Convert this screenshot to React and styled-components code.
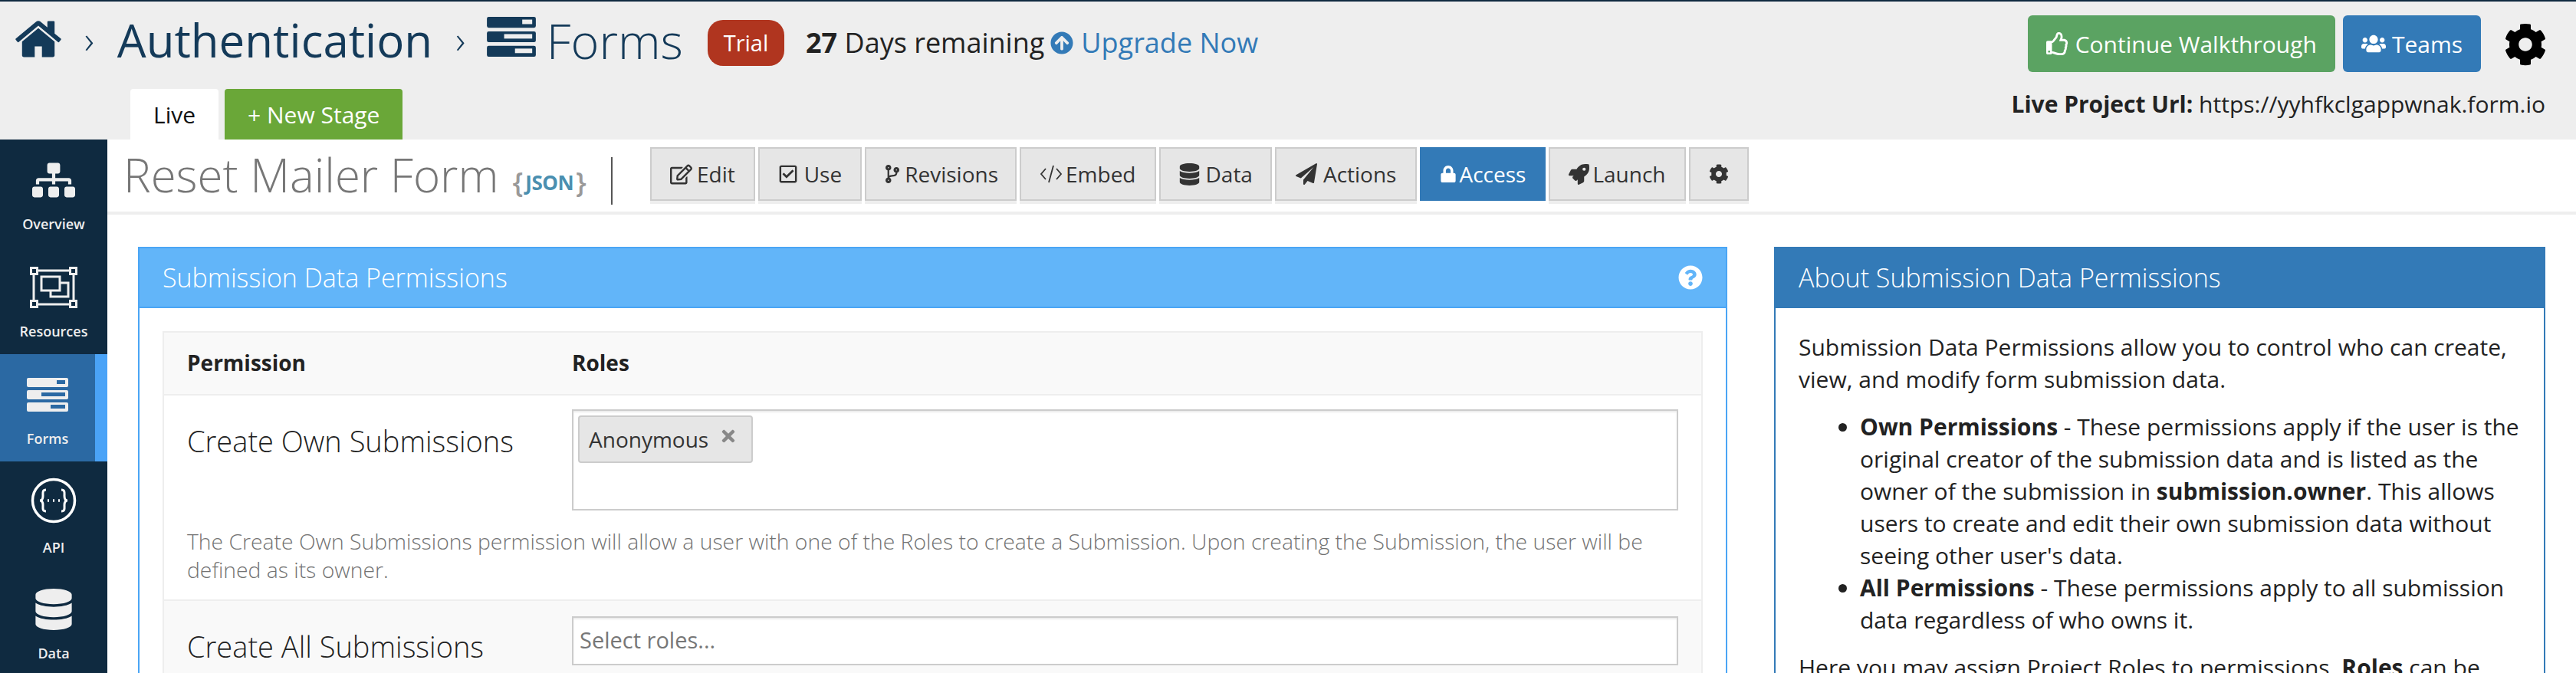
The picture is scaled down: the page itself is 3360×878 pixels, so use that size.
import React from 'react'
import styled, { createGlobalStyle } from 'styled-components'
import {
  FaSitemap, FaDatabase, FaCodeBranch, FaLock, FaRocket, FaCog,
  FaRegThumbsUp, FaUsers, FaArrowCircleUp, FaQuestionCircle, FaTimes, FaRegEdit, FaRegCheckSquare,
} from 'react-icons/fa'

const Global = createGlobalStyle`
  html, body { margin: 0; padding: 0; background: #fff; }
  body { font-family: "Open Sans", sans-serif; font-size: 28px; line-height: 1.5; color: #222; overflow: hidden; }
  * { box-sizing: border-box; }
`

const Page = styled.div`
  width: 3360px;
  height: 878px;
  overflow: hidden;
  display: flex;
  flex-direction: column;
`

const Header = styled.header`
  height: 182px;
  flex: none;
  background: #eee;
  border-top: 2px solid #0f2a40;
  display: flex;
  flex-direction: column;
`

const HeaderTop = styled.div`
  height: 114px;
  flex: none;
  display: flex;
  justify-content: space-between;
  padding: 18px 38px 0 17px;
`

const Crumbs = styled.div`
  display: flex;
  align-items: center;
  height: 66px;
  margin-top: 3px;
  color: #143a59;
`

const CrumbIcon = styled.span`
  display: flex;
  margin-bottom: ${p => p.$lift}px;
`

const Chevron = styled.span`
  font-size: 50px;
  font-weight: 300;
  line-height: 1;
  margin: ${p => p.$margin};
  color: #143a59;
`

const CrumbText = styled.span`
  font-size: ${p => p.$light ? 63 : 60}px;
  line-height: 1;
  margin-bottom: 8px;
  font-weight: ${p => p.$light ? 300 : 400};
  margin-left: ${p => p.$gap || 0}px;
`

const TrialBadge = styled.span`
  width: 100px;
  height: 60px;
  margin-left: 32px;
  border-radius: 20px;
  background: #b0351f;
  color: #fff;
  display: flex;
  align-items: center;
  justify-content: center;
  font-size: 29px;
`

const Remaining = styled.span`
  margin-left: 28px;
  font-size: 36px;
  color: #222;
  white-space: nowrap;
  b { font-weight: 700; }
`

const Upgrade = styled.a`
  margin-left: 8px;
  font-size: 36px;
  color: #337ab7;
  display: flex;
  align-items: center;
  gap: 10px;
  white-space: nowrap;
`

const HeaderActions = styled.div`
  display: flex;
  align-items: flex-start;
  gap: 10px;
`

const ActionButton = styled.a`
  height: 74px;
  padding: 0 24px;
  border-radius: 6px;
  background: ${p => p.$bg};
  color: #fff;
  display: flex;
  align-items: center;
  gap: 8px;
  font-size: 30px;
  white-space: nowrap;
`

const TopGear = styled.span`
  display: flex;
  margin: 10px 0 0 20px;
  color: #000;
  font-size: 56px;
`

const HeaderBottom = styled.div`
  flex: 1;
  display: flex;
  justify-content: space-between;
  padding: 0 40px 0 170px;
`

const Tabs = styled.div`
  display: flex;
  gap: 8px;
`

const Tab = styled.a`
  height: 66px;
  padding: 0 ${p => p.$pad}px;
  border-radius: 4px 4px 0 0;
  background: ${p => p.$bg};
  color: ${p => p.$color};
  display: flex;
  align-items: center;
  font-size: 30px;
`

const ProjectUrl = styled.div`
  font-size: 30px;
  line-height: 40px;
  color: #222;
  b { font-weight: 700; }
`

const Body = styled.div`
  flex: 1;
  display: flex;
  min-height: 0;
`

const Sidebar = styled.nav`
  width: 140px;
  flex: none;
  background: #0f2a40;
`

const NavItem = styled.a`
  height: 140px;
  display: flex;
  flex-direction: column;
  align-items: center;
  color: #eee;
  padding-top: ${p => p.$top || 22}px;
  font-size: 18px;
  font-weight: 600;
  line-height: 24px;
  background: ${p => p.$active ? '#2b69a3' : 'transparent'};
  border-right: ${p => p.$active ? '16px solid #4aa3f7' : '0'};
`

const NavIcon = styled.span`
  height: 62px;
  display: flex;
  align-items: center;
  justify-content: center;
  margin-bottom: ${p => p.$below || 14}px;
`

const Content = styled.main`
  flex: 1;
  min-width: 0;
`

const TitleBar = styled.div`
  height: 98px;
  border-bottom: 4px solid #eee;
  display: flex;
  padding: 10px 0 0 21px;
`

const FormTitle = styled.h1`
  margin: 0;
  font-size: 60px;
  line-height: 72px;
  font-weight: 300;
  color: #777;
  white-space: nowrap;
`

const JsonMark = styled.span`
  height: 44px;
  margin: 24px 0 0 18px;
  display: flex;
  align-items: center;
  font-size: 36px;
  font-weight: 600;
  color: #999;
  white-space: nowrap;
  i { font-style: normal; font-weight: 700; color: #4a8fb0; font-size: 26px; letter-spacing: -0.5px; margin: 0 3px; }
`

const Divider = styled.span`
  width: 2px;
  height: 62px;
  margin: 13px 49px 0 32px;
  background: #555;
  flex: none;
`

const ButtonRow = styled.div`
  display: flex;
  gap: 4px;
`

const TabButton = styled.a`
  height: 70px;
  padding: 0 ${p => p.$pad || 24}px;
  display: flex;
  align-items: center;
  gap: ${p => p.$gap || 8}px;
  font-size: 28px;
  white-space: nowrap;
  border: 2px solid ${p => p.$active ? '#337ab7' : '#ccc'};
  background: ${p => p.$active ? '#337ab7' : '#e6e6e6'};
  color: ${p => p.$active ? '#fff' : '#333'};
  box-shadow: ${p => p.$active ? 'none' : '0 4px 0 #eee'};
`

const Panels = styled.div`
  display: grid;
  grid-template-columns: 2073px 1006px;
  gap: 61px;
  padding: 42px 40px 0;
`

const Panel = styled.section`
  border: 2px solid ${p => p.$color};
  min-height: 600px;
`

const PanelHead = styled.div`
  height: 78px;
  padding: 0 30px;
  background: ${p => p.$bg};
  border-bottom: 2px solid ${p => p.$color};
  color: #fff;
  font-size: 34px;
  display: flex;
  align-items: center;
  justify-content: space-between;
  font-weight: 300;
`

const PanelBody = styled.div`
  padding: 30px;
`

const Table = styled.div`
  border: 2px solid #eee;
`

const TableRow = styled.div`
  display: grid;
  grid-template-columns: 502px 1fr;
  padding: ${p => p.$pad || '18px 30px'};
  background: ${p => p.$shade ? '#f9f9f9' : '#fff'};
  border-top: ${p => p.$first ? '0' : '2px solid #eee'};
`

const HeadCell = styled.div`
  font-size: 28px;
  font-weight: 700;
  line-height: 42px;
`

const RowLabel = styled.div`
  font-size: 38px;
  font-weight: 300;
  line-height: 50px;
  padding-top: ${p => p.$top}px;
  color: #222;
`

const RoleBox = styled.div`
  height: ${p => p.$height}px;
  border: 2px solid #ccc;
  background: #fff;
  box-shadow: inset 0 2px 2px rgba(0, 0, 0, 0.075);
  padding: 6px;
  display: flex;
  align-items: flex-start;
  color: #777;
  font-size: 28px;
`

const Chip = styled.span`
  height: 62px;
  padding: 0 18px 0 12px;
  display: flex;
  align-items: center;
  gap: 14px;
  background: #e6e6e6;
  border: 2px solid #ccc;
  border-radius: 4px;
  color: #333;
  svg { color: #888; margin-bottom: 8px; }
`

const Placeholder = styled.span`
  line-height: 46px;
  padding-left: 2px;
  font-size: 29px;
  color: #777;
`

const HelpText = styled.p`
  grid-column: 1 / -1;
  margin: 22px 0 0;
  font-size: 28.3px;
  line-height: 37px;
  font-weight: 300;
  color: #737373;
`

const AboutText = styled.p`
  margin: 0 0 20px;
  font-size: 30px;
  line-height: 42px;
`

const AboutList = styled.ul`
  margin: 0 0 20px;
  padding-left: 80px;
  font-size: 30px;
  line-height: 42px;
`

const HomeIcon = () => (
  <svg width="66" height="66" viewBox="0 0 1792 1792" fill="currentColor">
    <path d="M1472 992v480q0 26-19 45t-45 19h-384v-384h-256v384h-384q-26 0-45-19t-19-45v-480q0-1 .5-3t.5-3l575-474 575 474q1 2 1 6zm223-69l-62 74q-8 9-21 11h-3q-13 0-21-7l-692-577-692 577q-12 8-24 7-13-2-21-11l-62-74q-8-10-7-23.5t11-21.5l719-599q32-26 76-26t76 26l244 204v-195q0-14 9-23t23-9h192q14 0 23 9t9 23v408l219 182q10 8 11 21.5t-7 23.5z" />
  </svg>
)

const PlaneIcon = () => (
  <svg width="28" height="28" viewBox="0 0 1792 1792" fill="currentColor">
    <path d="M1764 11q33 24 27 64l-256 1536q-5 29-32 45-14 8-31 8-11 0-24-5l-453-185-242 295q-18 23-49 23-13 0-22-4-19-7-30.5-23.5t-11.5-36.5v-349l864-1059-1069 925-395-162q-37-14-40-55-2-40 32-59l1664-960q15-9 32-9 20 0 36 11z" />
  </svg>
)

const FormsIcon = ({ width, height, color, slot }) => (
  <svg width={width} height={height} viewBox="0 0 54 44">
    <rect x="0" y="0" width="54" height="12" rx="2" fill={color} />
    <rect x="0" y="16" width="54" height="12" rx="2" fill={color} />
    <rect x="0" y="32" width="54" height="12" rx="2" fill={color} />
    <rect x="39" y="3" width="11" height="5" fill={slot} />
    <rect x="19" y="19" width="31" height="5" fill={slot} />
    <rect x="31" y="35" width="19" height="5" fill={slot} />
  </svg>
)

const ResourcesIcon = () => (
  <svg width="62" height="54" viewBox="0 0 62 54" fill="none" stroke="#eee" strokeWidth="3">
    <rect x="5" y="5" width="52" height="44" />
    <rect x="1.5" y="1.5" width="8" height="8" fill="#0f2a40" />
    <rect x="52.5" y="1.5" width="8" height="8" fill="#0f2a40" />
    <rect x="1.5" y="44.5" width="8" height="8" fill="#0f2a40" />
    <rect x="52.5" y="44.5" width="8" height="8" fill="#0f2a40" />
    <rect x="15" y="13" width="24" height="18" />
    <path d="M39 21h11v18H27v-8" />
  </svg>
)

const ApiIcon = () => (
  <svg width="60" height="60" viewBox="0 0 60 60" fill="none" stroke="#fff" strokeWidth="3.5">
    <circle cx="30" cy="30" r="27.5" />
    <path d="M20 16c-5 0-4 4-4 8s-1 6-4 6c3 0 4 2 4 6s-1 8 4 8" strokeWidth="3" />
    <path d="M40 16c5 0 4 4 4 8s1 6 4 6c-3 0-4 2-4 6s1 8-4 8" strokeWidth="3" />
    <path d="M22 30h2M29 30h2M36 30h2" strokeWidth="3.5" />
  </svg>
)

const EmbedIcon = () => (
  <svg width="30" height="26" viewBox="0 0 30 26" fill="none" stroke="#333" strokeWidth="1.8">
    <path d="M8 6l-6 7 6 7M22 6l6 7-6 7M18 2l-6 22" />
  </svg>
)

const buttons = [
  { label: 'Edit', icon: <FaRegEdit size={29} />, pad: 24, gap: 6 },
  { label: 'Use', icon: <FaRegCheckSquare size={26} />, pad: 24 },
  { label: 'Revisions', icon: <FaCodeBranch size={24} />, pad: 22, gap: 4 },
  { label: 'Embed', icon: <EmbedIcon />, pad: 24, gap: 4 },
  { label: 'Data', icon: <FaDatabase size={29} />, pad: 23, gap: 7 },
  { label: 'Actions', icon: <PlaneIcon />, pad: 25, gap: 8 },
  { label: 'Access', icon: <FaLock size={22} />, active: true, pad: 24, gap: 3 },
  { label: 'Launch', icon: <FaRocket size={27} />, pad: 24, gap: 4 },
  { icon: <FaCog size={26} />, pad: 24 },
]

export default function App() {
  return (
    <Page>
      <Global />
      <Header>
        <HeaderTop>
          <Crumbs>
            <CrumbIcon $lift={10}><HomeIcon /></CrumbIcon>
            <Chevron $margin="0 30px 10px 27px">›</Chevron>
            <CrumbText>Authentication</CrumbText>
            <Chevron $margin="0 28px 10px 30px">›</Chevron>
            <CrumbIcon $lift={16}><FormsIcon width={64} height={52} color="#143a59" slot="#eee" /></CrumbIcon>
            <CrumbText $light $gap={14}>Forms</CrumbText>
            <TrialBadge>Trial</TrialBadge>
            <Remaining><b>27</b> Days remaining</Remaining>
            <Upgrade><FaArrowCircleUp size={30} />Upgrade Now</Upgrade>
          </Crumbs>
          <HeaderActions>
            <ActionButton $bg="#5ba362"><FaRegThumbsUp size={30} />Continue Walkthrough</ActionButton>
            <ActionButton $bg="#337ab7"><FaUsers size={32} />Teams</ActionButton>
            <TopGear><FaCog /></TopGear>
          </HeaderActions>
        </HeaderTop>
        <HeaderBottom>
          <Tabs>
            <Tab $bg="#fff" $color="#111" $pad={30}>Live</Tab>
            <Tab $bg="#6aa738" $color="#fff" $pad={30}>+ New Stage</Tab>
          </Tabs>
          <ProjectUrl><b>Live Project Url:</b> https://yyhfkclgappwnak.form.io</ProjectUrl>
        </HeaderBottom>
      </Header>
      <Body>
        <Sidebar>
          <NavItem>
            <NavIcon><FaSitemap size={56} /></NavIcon>Overview
          </NavItem>
          <NavItem>
            <NavIcon><ResourcesIcon /></NavIcon>Resources
          </NavItem>
          <NavItem $active>
            <NavIcon><FormsIcon width={54} height={44} color="#eee" slot="#2b69a3" /></NavIcon>Forms
          </NavItem>
          <NavItem $top={20}>
            <NavIcon $below={18}><ApiIcon /></NavIcon>API
          </NavItem>
          <NavItem $top={22}>
            <NavIcon><FaDatabase size={54} /></NavIcon>Data
          </NavItem>
        </Sidebar>
        <Content>
          <TitleBar>
            <FormTitle>Reset Mailer Form</FormTitle>
            <JsonMark>{'{'}<i>JSON</i>{'}'}</JsonMark>
            <Divider />
            <ButtonRow>
              {buttons.map((b, i) => (
                <TabButton key={i} $active={b.active} $pad={b.pad} $gap={b.gap}>{b.icon}{b.label}</TabButton>
              ))}
            </ButtonRow>
          </TitleBar>
          <Panels>
            <Panel $color="#4aa5f5">
              <PanelHead $bg="#62b5f9" $color="#4aa5f5">
                Submission Data Permissions
                <FaQuestionCircle size={32} />
              </PanelHead>
              <PanelBody>
                <Table>
                  <TableRow $first $shade $pad="18px 30px 20px">
                    <HeadCell>Permission</HeadCell>
                    <HeadCell>Roles</HeadCell>
                  </TableRow>
                  <TableRow $pad="18px 30px 20px">
                    <RowLabel $top={16}>Create Own Submissions</RowLabel>
                    <RoleBox $height={132}>
                      <Chip>Anonymous <FaTimes size={24} /></Chip>
                    </RoleBox>
                    <HelpText>
                      The Create Own Submissions permission will allow a user with one of the Roles to create a Submission. Upon creating the Submission, the user will be defined as its owner.
                    </HelpText>
                  </TableRow>
                  <TableRow $shade $pad="20px 30px 18px">
                    <RowLabel $top={14}>Create All Submissions</RowLabel>
                    <RoleBox $height={64}>
                      <Placeholder>Select roles...</Placeholder>
                    </RoleBox>
                  </TableRow>
                </Table>
              </PanelBody>
            </Panel>
            <Panel $color="#337ab7">
              <PanelHead $bg="#337ab7" $color="#337ab7">About Submission Data Permissions</PanelHead>
              <PanelBody>
                <AboutText>Submission Data Permissions allow you to control who can create, view, and modify form submission data.</AboutText>
                <AboutList>
                  <li><b>Own Permissions</b> - These permissions apply if the user is the original creator of the submission data and is listed as the owner of the submission in <b>submission.owner</b>. This allows users to create and edit their own submission data without seeing other user's data.</li>
                  <li><b>All Permissions</b> - These permissions apply to all submission data regardless of who owns it.</li>
                </AboutList>
                <AboutText>Here you may assign Project Roles to permissions. <b>Roles</b> can be</AboutText>
              </PanelBody>
            </Panel>
          </Panels>
        </Content>
      </Body>
    </Page>
  )
}
